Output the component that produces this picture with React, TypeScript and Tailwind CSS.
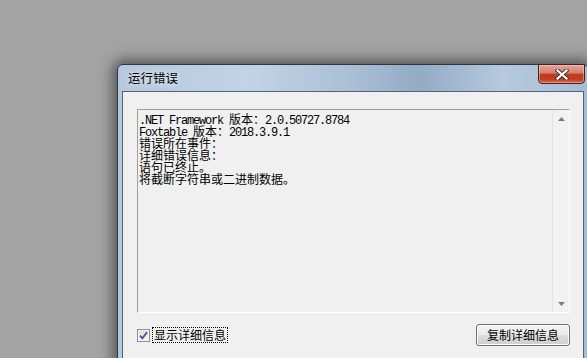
import React from 'react'

const lines = [
  '.NET Framework 版本：2.0.50727.8784',
  'Foxtable 版本：2018.3.9.1',
  '错误所在事件：',
  '详细错误信息：',
  '语句已终止。',
  '将截断字符串或二进制数据。',
]

// ascii runs get squeezed to 6px cells, cjk keeps its 12px cell
function MixedLine({ text }: { text: string }) {
  const parts = text.match(/[\x00-\x7f]+|[^\x00-\x7f]+/g) ?? []
  return (
    <div className="h-[12px] leading-[12px] whitespace-pre">
      {parts.map((p, i) =>
        /^[\x00-\x7f]/.test(p) ? (
          <span key={i} className="font-['Liberation_Mono',monospace] tracking-[-1.2px]">
            {p}
          </span>
        ) : (
          <span key={i} className="font-['Noto_Sans_CJK_SC',sans-serif]">
            {p}
          </span>
        )
      )}
    </div>
  )
}

function CloseButton() {
  return (
    <div className="absolute right-[3px] top-[-1px] flex h-[20px] w-[47px] items-center justify-center rounded-b-[4px] border border-[#3d2320] bg-[linear-gradient(180deg,#e6a497_0%,#d67d6b_45%,#c23a1e_52%,#c13c20_78%,#d8694c_100%)] shadow-[inset_0_0_0_1px_rgba(255,210,200,0.45)]">
      <svg width="14" height="11" viewBox="0 0 14 11">
        <path d="M2.5 1.5 L11.5 9.5 M11.5 1.5 L2.5 9.5" stroke="#3a3a3a" strokeWidth="4.2" strokeLinecap="square" />
        <path d="M2.5 1.5 L11.5 9.5 M11.5 1.5 L2.5 9.5" stroke="#ffffff" strokeWidth="2.2" strokeLinecap="square" />
      </svg>
    </div>
  )
}

function Arrow({ up }: { up?: boolean }) {
  return (
    <div className="flex h-[17px] w-full items-center justify-center">
      <svg width="7" height="4" viewBox="0 0 7 4">
        <path d={up ? 'M0 4 L3.5 0 L7 4 Z' : 'M0 0 L3.5 4 L7 0 Z'} fill="#7a7a7a" />
      </svg>
    </div>
  )
}

export default function App() {
  return (
    <div className="h-[358px] w-[587px] overflow-hidden bg-[#a3a3a3] pl-[117px] pt-[64px] text-[12px] text-black font-['Noto_Sans_CJK_SC',sans-serif]">
      <div className="relative h-[320px] w-[472px] rounded-t-[6px] border border-[#2c3644] bg-[linear-gradient(90deg,#b5c8dd_0%,#c2d3e5_28%,#aabfd5_50%,#93abc6_64%,#b6c9dd_82%,#a6bcd4_100%)] px-[4px] shadow-[0_0_14px_4px_rgba(0,0,0,0.5)]">
        <div className="flex h-[26px] items-center pl-[6px] text-[12.5px] [text-shadow:0_0_6px_#ffffff]">运行错误</div>
        <CloseButton />

        <div className="h-[300px] border border-[#52637a] bg-[#f0f0f0] pl-[14px] pr-[13px] pt-[17px]">
          <div className="flex h-[204px] w-[433px] border-b border-l border-r border-t border-b-white border-l-[#a0a0a0] border-r-white border-t-[#a0a0a0]">
            <div className="flex-1 pl-[1px] pt-[3px]">
              {lines.map((l) => (
                <MixedLine key={l} text={l} />
              ))}
            </div>
            <div className="flex w-[17px] flex-col justify-between border-l border-[#e4e4e4] bg-[#f2f2f2]">
              <Arrow up />
              <Arrow />
            </div>
          </div>

          <div className="mt-[11px] flex h-[22px] items-center justify-between">
            <div className="flex items-center">
              <div className="flex h-[13px] w-[13px] items-center justify-center border border-[#8e8f8f] bg-[linear-gradient(180deg,#dcdcdc,#f6f6f6)] shadow-[inset_0_0_0_1px_#f4f4f4]">
                <svg width="9" height="9" viewBox="0 0 9 9">
                  <path d="M1 4.6 L3.4 7.4 L8 1.2" fill="none" stroke="#41549a" strokeWidth="1.8" />
                </svg>
              </div>
              <div className="ml-[2px] border border-dotted border-black px-[1px] leading-[14px]">显示详细信息</div>
            </div>
            <button className="flex h-[22px] w-[94px] items-center justify-center rounded-[3px] border border-[#707070] bg-[linear-gradient(180deg,#f3f3f3_0%,#ebebeb_48%,#dddddd_52%,#cfcfcf_100%)] shadow-[inset_0_0_0_1px_#fbfbfb]">
              复制详细信息
            </button>
          </div>
        </div>
      </div>
    </div>
  )
}
